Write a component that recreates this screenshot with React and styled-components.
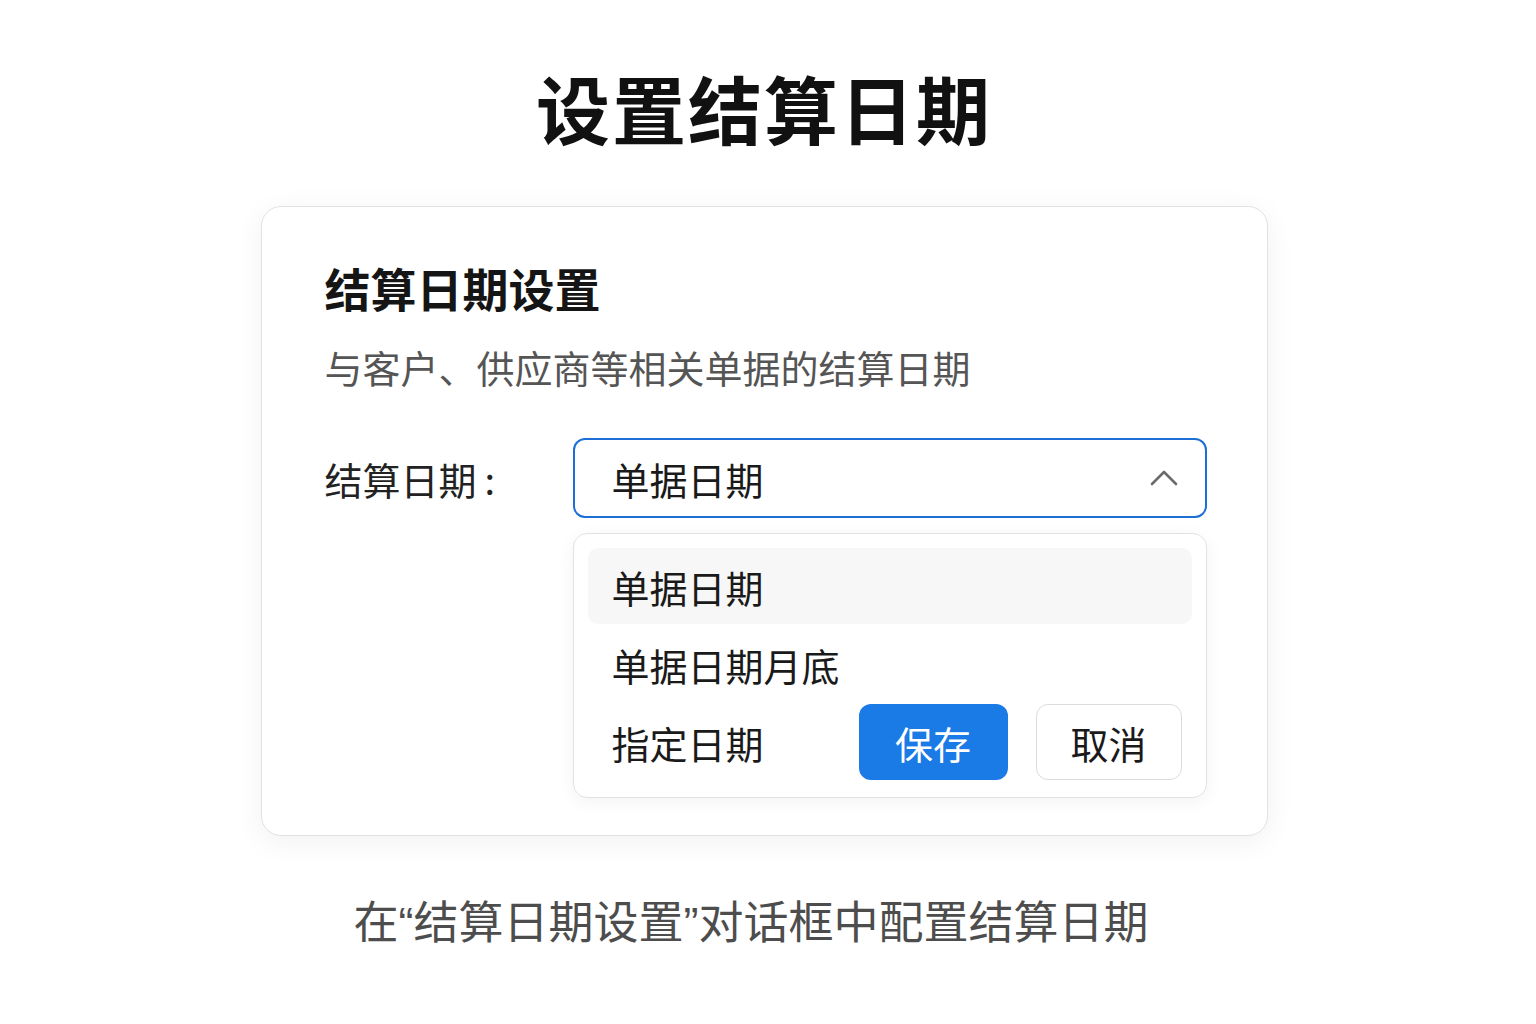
import React from "react";
import styled, { createGlobalStyle } from "styled-components";

const GlobalStyle = createGlobalStyle`
  body {
    margin: 0;
    background: #ffffff;
    font-family: "Noto Sans CJK SC", "Noto Sans", sans-serif;
  }
`;

const Page = styled.div`
  width: 1536px;
  height: 1024px;
  display: flex;
  flex-direction: column;
  align-items: center;
  box-sizing: border-box;
  padding: 62px 8px 0 0;
`;

const Title = styled.h1`
  margin: 0;
  font-size: 74px;
  line-height: 90px;
  font-weight: 700;
  color: #111;
  letter-spacing: 2px;
`;

const Card = styled.div`
  margin-top: 54px;
  width: 1007px;
  box-sizing: border-box;
  padding: 53px 60px 37px 63px;
  border: 1.5px solid #e2e2e2;
  border-radius: 20px;
  background: #fff;
  box-shadow: 0 6px 30px rgba(0, 0, 0, 0.06);
`;

const Heading = styled.h2`
  margin: 0;
  font-size: 46px;
  line-height: 55px;
  font-weight: 700;
  color: #151515;
`;

const Subtitle = styled.p`
  margin: 28px 0 0;
  font-size: 38px;
  line-height: 47px;
  color: #555;
`;

const FormRow = styled.div`
  margin-top: 48px;
  display: flex;
  align-items: flex-start;
`;

const Label = styled.div`
  width: 248px;
  flex-shrink: 0;
  height: 80px;
  display: flex;
  align-items: center;
  font-size: 38px;
  color: #222;
`;

const Colon = styled.span`
  margin-left: 8px;
`;

const Field = styled.div`
  flex: 1;
  display: flex;
  flex-direction: column;
  gap: 15px;
`;

const Select = styled.div`
  height: 80px;
  box-sizing: border-box;
  border: 2px solid #1d6fd6;
  border-radius: 12px;
  display: flex;
  align-items: center;
  justify-content: space-between;
  padding: 0 26px 0 37px;
  font-size: 38px;
  color: #1a1a1a;
`;

const Menu = styled.div`
  box-sizing: border-box;
  border: 1.5px solid #e2e2e2;
  border-radius: 14px;
  padding: 14px 14px 17px;
  display: flex;
  flex-direction: column;
  gap: 2px;
  box-shadow: 0 4px 18px rgba(0, 0, 0, 0.05);
`;

const Option = styled.div`
  height: 76px;
  display: flex;
  align-items: center;
  padding: 0 10px 0 24px;
  border-radius: 10px;
  background: ${(p) => (p.$active ? "#f7f7f7" : "transparent")};
  font-size: 38px;
  color: #1a1a1a;
`;

const Actions = styled.div`
  margin-left: auto;
  display: flex;
  gap: 28px;
`;

const Button = styled.button`
  height: 76px;
  width: ${(p) => (p.$primary ? "149px" : "146px")};
  border-radius: 12px;
  border: ${(p) => (p.$primary ? "none" : "1.5px solid #dcdcdc")};
  background: ${(p) => (p.$primary ? "#1a7ae6" : "#fff")};
  color: ${(p) => (p.$primary ? "#fff" : "#1a1a1a")};
  font-family: inherit;
  font-size: 38px;
  padding: 0;
  cursor: pointer;
`;

const Caption = styled.p`
  margin: 60px 26px 0 0;
  font-family: "Liberation Sans", "Noto Sans CJK SC", sans-serif;
  font-size: 45px;
  line-height: 56px;
  color: #4d4d4d;
`;

const Chevron = () => (
  <svg width="30" height="20" viewBox="0 0 30 20" fill="none">
    <path
      d="M3 16 L15 4 L27 16"
      stroke="#6b6b6b"
      strokeWidth="2.6"
      strokeLinecap="round"
      strokeLinejoin="round"
    />
  </svg>
);

export default function App() {
  return (
    <>
      <GlobalStyle />
      <Page>
        <Title>设置结算日期</Title>
        <Card>
          <Heading>结算日期设置</Heading>
          <Subtitle>与客户、供应商等相关单据的结算日期</Subtitle>
          <FormRow>
            <Label>
              结算日期<Colon>:</Colon>
            </Label>
            <Field>
              <Select>
                <span>单据日期</span>
                <Chevron />
              </Select>
              <Menu>
                <Option $active>单据日期</Option>
                <Option>单据日期月底</Option>
                <Option>
                  指定日期
                  <Actions>
                    <Button $primary>保存</Button>
                    <Button>取消</Button>
                  </Actions>
                </Option>
              </Menu>
            </Field>
          </FormRow>
        </Card>
        <Caption>在“结算日期设置”对话框中配置结算日期</Caption>
      </Page>
    </>
  );
}
